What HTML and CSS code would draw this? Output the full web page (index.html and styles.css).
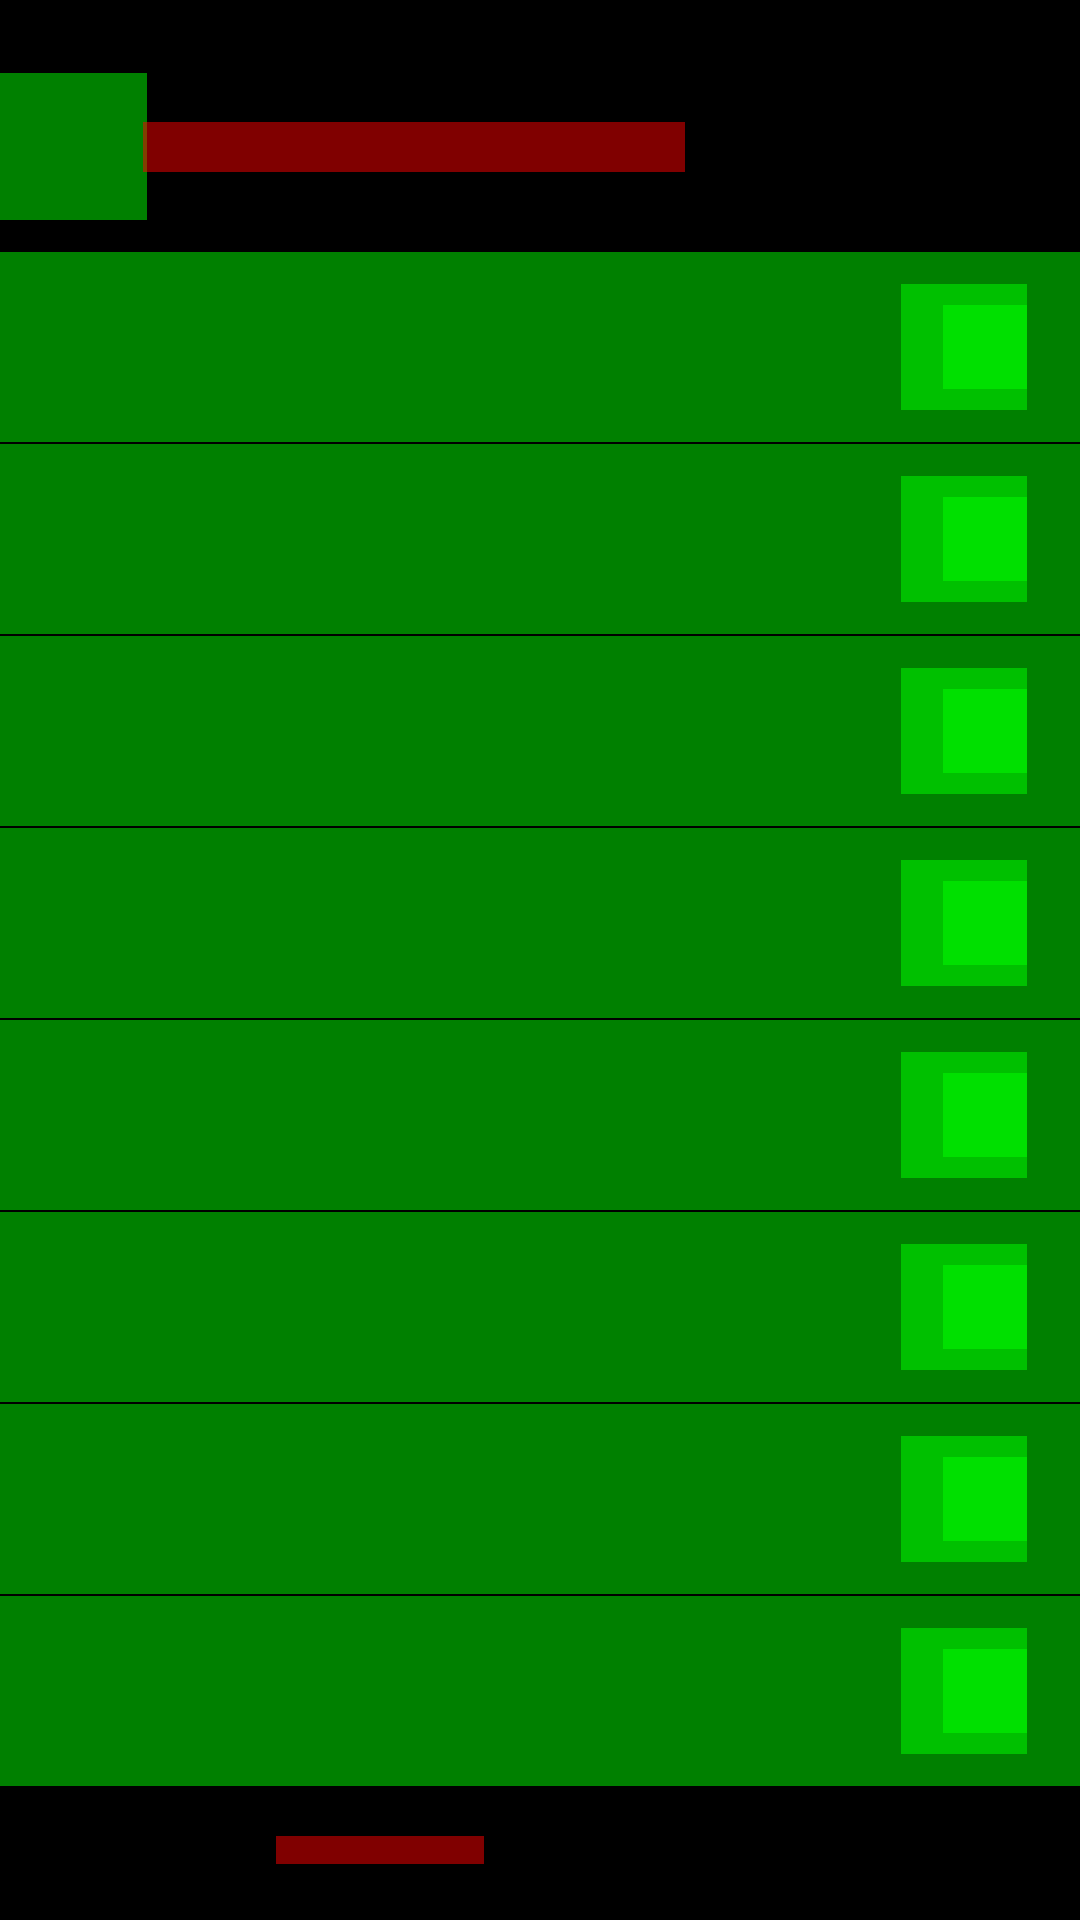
FILE: index.html
```html
<!DOCTYPE html>
<html lang="en">
<head>
<meta charset="utf-8">
<title>List</title>
<link rel="stylesheet" href="styles.css">
</head>
<body>
  <header class="header">
    <div class="avatar"></div>
    <div class="title"></div>
  </header>
  <main class="list">
    <div class="row"><div class="icon"><div class="icon-inner"></div></div></div>
    <div class="row"><div class="icon"><div class="icon-inner"></div></div></div>
    <div class="row"><div class="icon"><div class="icon-inner"></div></div></div>
    <div class="row"><div class="icon"><div class="icon-inner"></div></div></div>
    <div class="row"><div class="icon"><div class="icon-inner"></div></div></div>
    <div class="row"><div class="icon"><div class="icon-inner"></div></div></div>
    <div class="row"><div class="icon"><div class="icon-inner"></div></div></div>
    <div class="row"><div class="icon"><div class="icon-inner"></div></div></div>
  </main>
  <footer class="footer">
    <div class="footer-bar"></div>
  </footer>
</body>
</html>
```
FILE: styles.css
```css
html, body {
  margin: 0;
  padding: 0;
  background: #000;
  font-family: "Liberation Sans", Arial, sans-serif;
}
body {
  width: 1080px;
  height: 1920px;
  overflow: hidden;
}
.header {
  display: flex;
  align-items: flex-start;
  padding-top: 73px;
  height: 147px;
}
.avatar {
  width: 147px;
  height: 147px;
  background: rgba(0, 255, 0, 0.5);
  flex: none;
}
.title {
  width: 542px;
  height: 50px;
  margin-left: -4px;
  margin-top: 49px;
  background: rgba(255, 0, 0, 0.5);
  flex: none;
}
.list {
  margin-top: 32px;
  display: flex;
  flex-direction: column;
  gap: 2px;
}
.row {
  height: 190px;
  background: rgba(0, 255, 0, 0.5);
  display: flex;
  align-items: center;
  justify-content: flex-end;
  padding-right: 53px;
}
.icon {
  width: 126px;
  height: 126px;
  background: rgba(0, 255, 0, 0.5);
  display: flex;
  align-items: center;
  justify-content: flex-end;
}
.icon-inner {
  width: 84px;
  height: 84px;
  background: rgba(0, 255, 0, 0.5);
}
.footer {
  padding-top: 50px;
  padding-left: 276px;
}
.footer-bar {
  width: 208px;
  height: 28px;
  background: rgba(255, 0, 0, 0.5);
}
```
